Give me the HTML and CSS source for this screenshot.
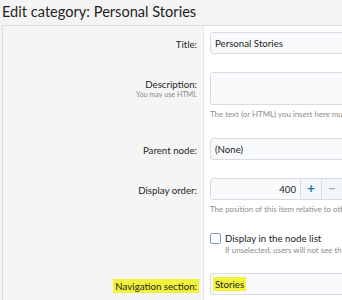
FILE: index.html
```html
<!DOCTYPE html>
<html lang="en">
<head>
  <meta charset="UTF-8">
  <title>Edit category</title>
  <link rel="stylesheet" href="styles.css">
</head>
<body>
  <h1 class="page-title">Edit category: Personal Stories</h1>

  <div class="form-block">
    <div class="form-row first">
      <div class="form-label"><span>Title:</span></div>
      <div class="form-field">
        <div class="input">Personal Stories</div>
      </div>
    </div>

    <div class="form-row">
      <div class="form-label">
        <span>Description:</span>
        <span class="label-hint">You may use HTML</span>
      </div>
      <div class="form-field">
        <div class="input textarea"></div>
        <div class="explain">The text (or HTML) you insert here must be valid.</div>
      </div>
    </div>

    <div class="form-row">
      <div class="form-label"><span>Parent node:</span></div>
      <div class="form-field">
        <div class="input">(None)</div>
      </div>
    </div>

    <div class="form-row">
      <div class="form-label"><span>Display order:</span></div>
      <div class="form-field">
        <div class="number-box">
          <div class="input number">400</div>
          <span class="spin plus">+</span>
          <span class="spin minus">&minus;</span>
        </div>
        <div class="explain">The position of this item relative to other nodes.</div>
      </div>
    </div>

    <div class="form-row">
      <div class="form-label"></div>
      <div class="form-field">
        <label class="check">
          <span class="box"></span>
          <span>Display in the node list</span>
        </label>
        <div class="explain check-hint">If unselected, users will not see this node.</div>
      </div>
    </div>

    <div class="form-row">
      <div class="form-label"><span class="mark">Navigation section:</span></div>
      <div class="form-field">
        <div class="input"><span class="mark">Stories</span></div>
        <div class="explain">This controls the navigation tab selected.</div>
      </div>
    </div>
  </div>
</body>
</html>
```

FILE: styles.css
```css
body {
  margin: 0;
  background: #f4f4f4;
  font-family: Lato, "Liberation Sans", sans-serif;
  font-size: 9.7px;
  color: #1d1d1d;
  overflow: hidden;
}
.page-title {
  margin: 0;
  padding: 0 0 0 2px;
  height: 25px;
  font-size: 14.6px;
  font-weight: 400;
  line-height: 23px;
  color: #1f1f1f;
}
.form-block {
  margin-left: 2px;
  border: 1px solid #dcdcdc;
  border-right: none;
  background: #fff;
  width: 500px;
}
.form-row {
  display: flex;
}
.form-label {
  width: 194px;
  flex: none;
  background: #f5f5f5;
  border-right: 1px solid #e3e3e3;
  padding: 15px 6px 0 0;
  display: flex;
  flex-direction: column;
  align-items: flex-end;
  text-align: right;
}
.form-row.first .form-label {
  padding-top: 12px;
}
.form-label span {
  display: block;
}
.form-label span:first-child {
  line-height: 12px;
}
.form-field {
  flex: 1;
  padding: 9px 0 9px 6px;
}
.form-row.first .form-field {
  padding-top: 6px;
}
.input {
  height: 22px;
  box-sizing: border-box;
  border: 1px solid #d8dce2;
  border-radius: 3px;
  background: #f8fafc;
  padding: 0 4px;
  line-height: 20px;
}
.textarea {
  height: 33px;
}
.label-hint {
  font-size: 7.2px;
  color: #8c8c8c;
  line-height: 10px;
}
.explain {
  font-size: 7.9px;
  color: #8c8c8c;
  line-height: 11px;
  margin-top: 4px;
  white-space: nowrap;
}
.mark {
  background: #f2f23a;
  padding: 1px 2px;
  margin: 0 -2px;
}
.number-box {
  display: flex;
  width: 300px;
}
.number.input {
  width: 91px;
  flex: none;
  text-align: right;
  border-radius: 3px 0 0 3px;
}
.spin {
  width: 21px;
  height: 22px;
  flex: none;
  box-sizing: border-box;
  border: 1px solid #d8dce2;
  border-left: none;
  background: #f3f6f9;
  text-align: center;
  font-size: 13px;
  line-height: 19px;
  font-weight: 700;
}
.spin.plus {
  color: #2577b1;
}
.spin.minus {
  color: #8aa9cc;
}
.check {
  display: flex;
  align-items: center;
  gap: 4px;
  line-height: 11px;
}
.box {
  width: 9px;
  height: 9px;
  border: 1px solid #7b9cc3;
  border-radius: 2px;
  background: #fff;
}
.check-hint {
  margin: 1px 0 0 15px;
  line-height: 10px;
}
```
